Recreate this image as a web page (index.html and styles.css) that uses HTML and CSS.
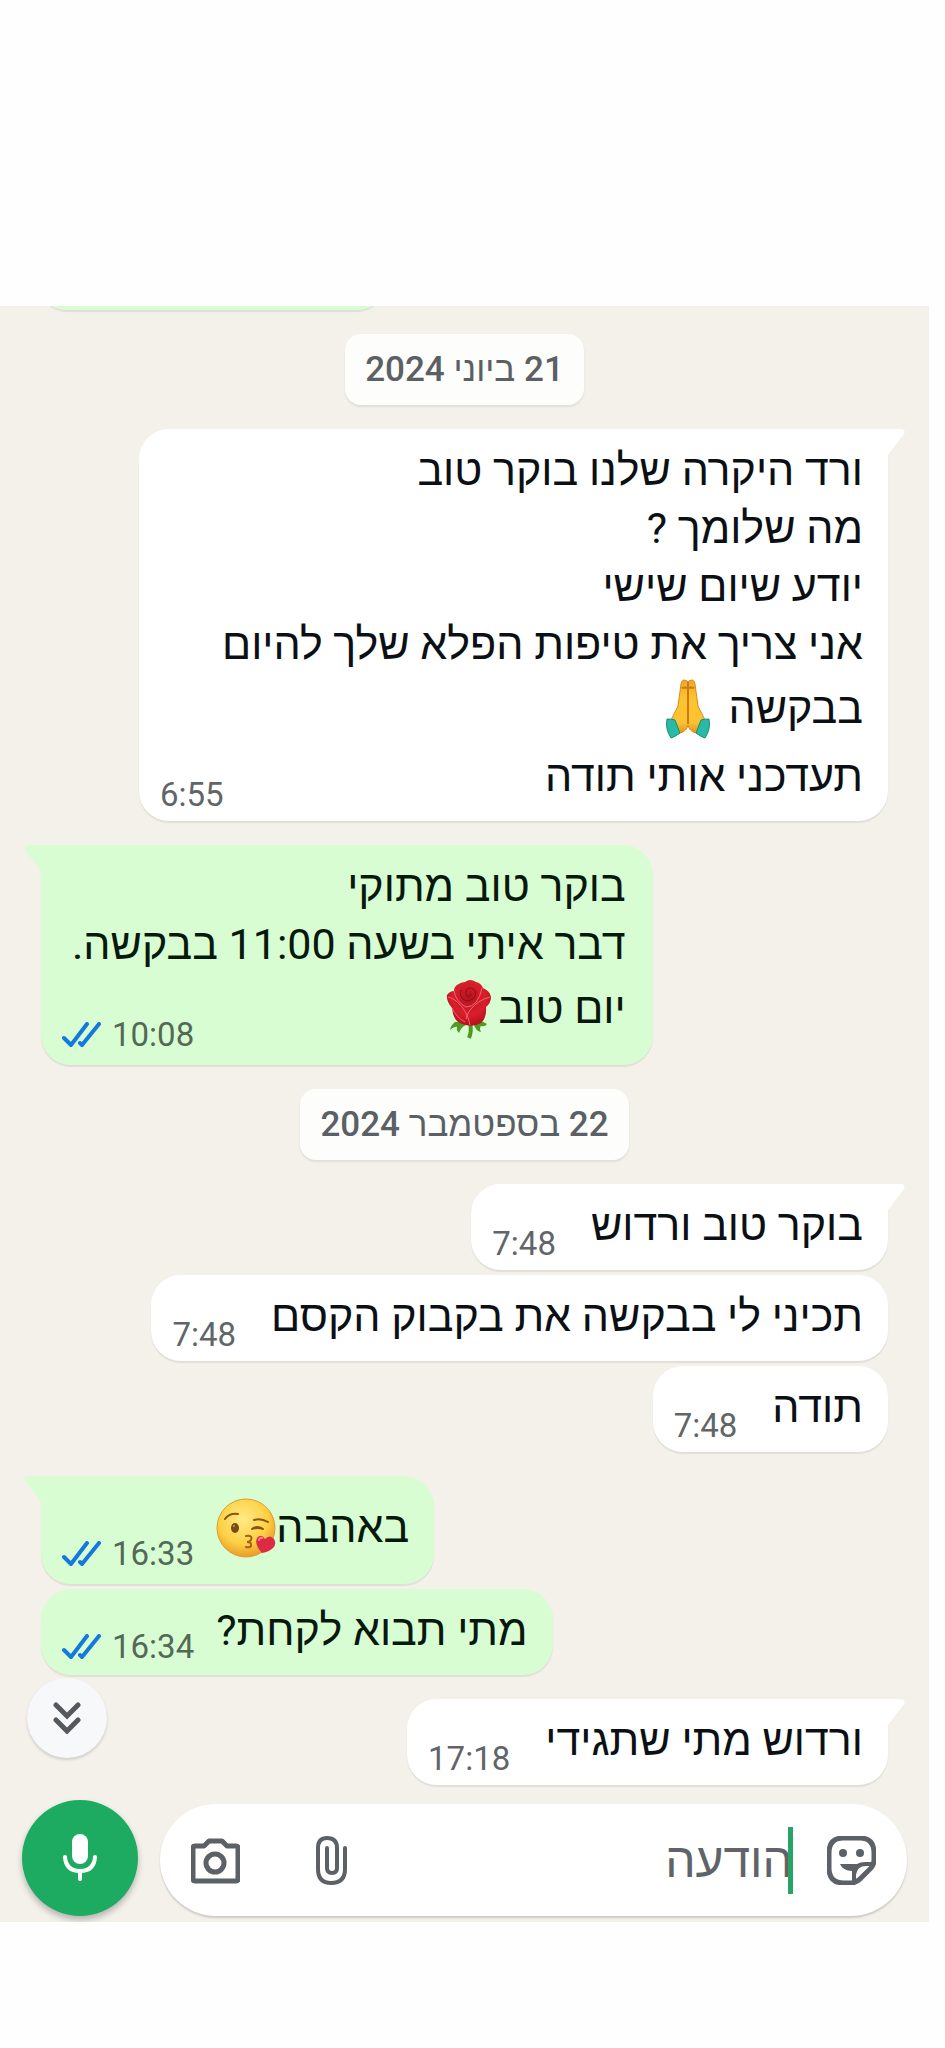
FILE: index.html
```
<!DOCTYPE html>
<html lang="he" dir="rtl">
<head>
    <meta charset="UTF-8">
    <meta name="viewport" content="width=device-width, initial-scale=1.0">
    <title>צ'אט</title>
    <link rel="stylesheet" href="styles.css">
</head>
<body>

    <!-- Shared shapes -->
    <svg class="defs" aria-hidden="true">
        <defs>
            <linearGradient id="skin" x1="0" y1="0" x2="0" y2="1">
                <stop offset="0" stop-color="#f2a629"/>
                <stop offset="0.35" stop-color="#fdc32f"/>
                <stop offset="0.8" stop-color="#fcc233"/>
                <stop offset="1" stop-color="#e8921c"/>
            </linearGradient>
            <radialGradient id="face" cx="0.45" cy="0.35" r="0.65">
                <stop offset="0" stop-color="#ffeb85"/>
                <stop offset="0.65" stop-color="#fdd045"/>
                <stop offset="1" stop-color="#e89c28"/>
            </radialGradient>
            <radialGradient id="rose" cx="0.5" cy="0.4" r="0.6">
                <stop offset="0" stop-color="#b3131f"/>
                <stop offset="0.6" stop-color="#d91f2c"/>
                <stop offset="1" stop-color="#b5101c"/>
            </radialGradient>
            <symbol id="ticks" viewBox="0 0 40 26">
                <path d="M2 16L9 23L25 2M18 21L20 23L37 2" fill="none" stroke="#1479dc" stroke-width="4" stroke-linecap="round" stroke-linejoin="round"/>
            </symbol>
            <symbol id="tail" viewBox="0 0 18 28">
                <path d="M0 0H15Q19 1 17 5L1 26L0 28Z" fill="currentColor"/>
            </symbol>
        </defs>
    </svg>

    <main class="chat">
        <div class="messages">
            <div class="bubble out previous"></div>

            <time class="date">21 <span>ביוני</span> 2024</time>

            <div class="group">
                <article class="bubble in wide">
                    <svg class="tail"><use href="#tail"/></svg>
                    <p>ורד היקרה שלנו בוקר טוב<br>
                    מה שלומך ?<br>
                    יודע שיום שישי<br>
                    אני צריך את טיפות הפלא שלך להיום<br>
                    בבקשה <svg class="emoji" viewBox="0 0 60 60" role="img" aria-label="ידיים צמודות">
                        <path d="M29 2Q24-1 23 5L20 27L14 39Q11 45 14 51L22 54Q29 52 30 46Q31 52 38 54L46 51Q49 45 46 39L40 27L37 5Q36-1 31 2L30 4Z" fill="url(#skin)" stroke="#d98a18" stroke-width="1"/>
                        <path d="M30 3V45M24 9Q27 8 30 9Q33 8 36 9" fill="none" stroke="#c97a12" stroke-width="2"/>
                        <path d="M9 40Q15 40 17 41L22 54Q17 58 13 59Q7 50 9 40Z" fill="#29b9a4" stroke="#12917f"/>
                        <path d="M51 40Q45 40 43 41L38 54Q43 58 47 59Q53 50 51 40Z" fill="#29b9a4" stroke="#12917f"/>
                    </svg><br>
                    תעדכני אותי תודה</p>
                    <div class="meta"><time>6:55</time></div>
                </article>
            </div>

            <div class="group">
                <article class="bubble out wide">
                    <svg class="tail"><use href="#tail"/></svg>
                    <p>בוקר טוב מתוקי<br>
                    דבר איתי בשעה 11:00 בבקשה.<br>
                    יום טוב<svg class="emoji" viewBox="0 0 60 60" role="img" aria-label="ורד">
                        <path d="M31 44Q33 52 30 59" fill="none" stroke="#4c9a1f" stroke-width="4"/>
                        <path d="M16 43Q12 46 11 51Q16 47 18 48Q17 51 20 54Q22 48 27 46H35Q37 52 42 53Q40 49 42 47Q46 48 48 45Q44 42 40 42Z" fill="#4f9927"/>
                        <path d="M18 6Q22 3 26 3Q31-1 37 3Q42 4 44 9Q51 12 52 18Q52 24 47 28Q48 39 42 44Q34 49 23 45Q14 42 13 29Q7 22 8 16Q11 12 15 12Q15 8 18 6Z" fill="url(#rose)"/>
                        <path d="M9 18Q19 20 27 34Q30 40 31 46M51 18Q39 21 31 31Q28 35 27 40M15 12Q17 23 27 28Q39 28 43 9M13 29Q17 38 26 43" fill="none" stroke="#ef6670" stroke-width="1"/>
                        <path d="M22 11Q20 19 27 22Q36 22 37 13Q33 7 28 10Q25 13 28 17Q32 18 32 14" fill="none" stroke="#8f0d19" stroke-width="1"/>
                    </svg></p>
                    <div class="meta"><time>10:08</time><svg class="ticks"><use href="#ticks"/></svg></div>
                </article>
            </div>

            <time class="date">22 <span>בספטמבר</span> 2024</time>

            <div class="group">
                <article class="bubble in">
                    <svg class="tail"><use href="#tail"/></svg>
                    <p>בוקר טוב ורדוש</p>
                    <div class="meta"><time>7:48</time></div>
                </article>
                <article class="bubble in">
                    <p>תכיני לי בבקשה את בקבוק הקסם</p>
                    <div class="meta"><time>7:48</time></div>
                </article>
                <article class="bubble in">
                    <p>תודה</p>
                    <div class="meta"><time>7:48</time></div>
                </article>
            </div>

            <div class="group">
                <article class="bubble out with-emoji">
                    <svg class="tail"><use href="#tail"/></svg>
                    <p>באהבה<svg class="emoji" viewBox="0 0 60 60" role="img" aria-label="פרצוף שולח נשיקה">
                        <circle cx="30" cy="30" r="29" fill="url(#face)" stroke="#e09a2b"/>
                        <path d="M9 21Q13 15 22 16M38 22Q45 20 52 24" fill="none" stroke="#8a5312" stroke-width="2" stroke-linecap="round"/>
                        <ellipse cx="19" cy="30" rx="4" ry="5" fill="#7b4a14"/>
                        <circle cx="18" cy="28" r="1" fill="#c99a5c"/>
                        <path d="M36 31Q41 27 47 31Q42 29 36 31Z" fill="#8a5312" stroke="#8a5312" stroke-width="2" stroke-linejoin="round"/>
                        <path d="M30 38Q37 37 35 42Q34 44 31 44Q36 44 35 48Q34 50 30 49" fill="none" stroke="#a5601a" stroke-width="2" stroke-linecap="round"/>
                        <path d="M46 55Q38 46 41 40Q45 35 49 41Q54 36 58 41Q61 46 57 50Q53 54 46 55Z" fill="#dc2c44"/>
                        <path d="M43 42Q44 39 46 40" fill="none" stroke="#f68a98" stroke-width="2" stroke-linecap="round"/>
                    </svg></p>
                    <div class="meta"><time>16:33</time><svg class="ticks"><use href="#ticks"/></svg></div>
                </article>
                <article class="bubble out">
                    <p>מתי תבוא לקחת?</p>
                    <div class="meta"><time>16:34</time><svg class="ticks"><use href="#ticks"/></svg></div>
                </article>
            </div>

            <div class="group">
                <article class="bubble in">
                    <svg class="tail"><use href="#tail"/></svg>
                    <p>ורדוש מתי שתגידי</p>
                    <div class="meta"><time>17:18</time></div>
                </article>
            </div>
        </div>

        <!-- Message box -->
        <form class="composer">
            <button type="button" class="jump" aria-label="גלילה למטה">
                <svg viewBox="0 0 28 32"><path d="M3 3L14 14L25 3M3 18L14 29L25 18" fill="none" stroke="#54595e" stroke-width="5" stroke-linecap="round" stroke-linejoin="miter"/></svg>
            </button>
            <div class="field">
                <button type="button" class="icon" aria-label="מדבקות">
                    <svg viewBox="0 0 49 49">
                        <path d="M16 2H33Q47 2 47 17V24Q47 29 44 32L33 43Q29 47 24 47H17Q2 47 2 32V17Q2 2 16 2Z" fill="none" stroke="currentColor" stroke-width="5"/>
                        <circle cx="16" cy="17" r="4" fill="currentColor"/>
                        <circle cx="33" cy="17" r="4" fill="currentColor"/>
                        <path d="M13 28H30Q33 26 38 26H47L46 30H39Q30 30 29 39V46H25V35Q16 35 13 28Z" fill="currentColor"/>
                    </svg>
                </button>
                <span class="caret"></span>
                <input type="text" class="text" placeholder="הודעה" aria-label="הודעה">
                <button type="button" class="icon" aria-label="צירוף קובץ">
                    <svg viewBox="0 0 49 49"><path d="M38 12V33Q38 47 24 47Q11 47 11 33V12Q11 2 20 2Q30 2 30 12V32Q30 37 25 37Q20 37 20 32V12" fill="none" stroke="currentColor" stroke-width="4" stroke-linecap="round"/></svg>
                </button>
                <button type="button" class="icon" aria-label="מצלמה">
                    <svg viewBox="0 0 49 49">
                        <path d="M4 10H13L18 5H31L36 10H45Q47 10 47 12V43Q47 45 45 45H4Q2 45 2 43V12Q2 10 4 10Z" fill="none" stroke="currentColor" stroke-width="5" stroke-linejoin="round"/>
                        <circle cx="24" cy="27" r="9" fill="none" stroke="currentColor" stroke-width="5"/>
                    </svg>
                </button>
            </div>
            <button type="button" class="mic" aria-label="הודעה קולית">
                <svg viewBox="0 0 34 48">
                    <rect x="9" y="0" width="16" height="30" rx="8" fill="#fff"/>
                    <path d="M2 23Q3 37 17 37Q31 37 32 23M17 38V45" fill="none" stroke="#fff" stroke-width="4" stroke-linecap="round"/>
                </svg>
            </button>
        </form>
    </main>

</body>
</html>
```
FILE: styles.css
```
* {
    box-sizing: border-box;
}

body {
    margin: 0;
    background: #fefefe;
    color: #0b1014;
    font-family: Roboto, "Liberation Sans", sans-serif;
}

.defs {
    position: absolute;
    width: 0;
    height: 0;
}

.chat {
    margin: 306px 16px 125px 0;
    background: #f4f1eb;
    overflow: hidden;
}

.messages {
    display: flex;
    flex-direction: column;
    gap: 24px;
    padding: 0 41px;
}

.group {
    display: flex;
    flex-direction: column;
    gap: 5px;
}

.date {
    align-self: center;
    padding: 0 20px;
    border-radius: 16px;
    background: #fdfdfb;
    box-shadow: 0 2px 2px rgba(0, 0, 0, 0.08);
    color: #5b6064;
    font-size: 35px;
    font-weight: 500;
    line-height: 71px;
}

.date span {
    font-weight: 400;
}

/* Bubbles */
.bubble {
    position: relative;
    display: flex;
    align-items: flex-end;
    max-width: calc(100% - 98px);
    padding: 12px 25px 16px 21px;
    border-radius: 30px;
    box-shadow: 0 2px 1px rgba(0, 0, 0, 0.08);
}

.bubble p {
    margin: 0;
    font-size: 43px;
    line-height: 58px;
}

.in {
    align-self: flex-start;
    background: #fff;
    color: #0b1014;
}

.out {
    align-self: flex-end;
    background: #d8fdd3;
    color: #07180c;
}

.previous {
    width: 342px;
    height: 50px;
    margin-top: -46px;
}

/* Time sits over the last line of long messages */
.wide {
    display: grid;
    padding-left: 31px;
}

.wide p,
.wide .meta {
    grid-area: 1 / 1;
}

.wide .meta {
    align-self: end;
    justify-self: end;
    margin-left: -10px;
}

.in.wide {
    width: 100%;
}

.out.wide {
    padding-right: 27px;
    padding-bottom: 18px;
}

.with-emoji {
    padding-top: 16px;
    padding-bottom: 18px;
}

.tail {
    position: absolute;
    top: 0;
    width: 18px;
    height: 28px;
}

.in .tail {
    right: -17px;
    color: #fff;
}

.out .tail {
    left: -17px;
    color: #d8fdd3;
    transform: scaleX(-1);
}

.in:has(.tail) {
    border-top-right-radius: 0;
}

.out:has(.tail) {
    border-top-left-radius: 0;
}

.meta {
    display: flex;
    align-items: center;
    gap: 10px;
    margin-right: 35px;
    margin-bottom: -8px;
    color: #616568;
    font-size: 33px;
    line-height: 36px;
}

.out .meta {
    margin-right: 22px;
    margin-bottom: -6px;
    color: #526a55;
}

.ticks {
    width: 40px;
    height: 26px;
}

.emoji {
    width: 60px;
    height: 60px;
    margin: 6px 0 8px;
    vertical-align: -24px;
}

/* Composer */
.composer {
    position: relative;
    display: flex;
    align-items: flex-end;
    gap: 22px;
    padding: 15px 22px 6px;
}

button {
    flex: none;
    padding: 0;
    border: none;
    background: none;
    cursor: pointer;
}

button svg {
    display: block;
    margin: auto;
}

.field {
    flex: 1;
    display: flex;
    align-items: center;
    min-width: 0;
    height: 112px;
    padding: 0 31px;
    border-radius: 56px;
    background: #fff;
    box-shadow: 0 2px 2px rgba(0, 0, 0, 0.16);
}

.icon {
    width: 49px;
    height: 49px;
    color: #5b6166;
}

.icon + .icon {
    margin-right: 67px;
}

.caret {
    z-index: 1;
    width: 5px;
    height: 67px;
    margin-right: 34px;
    margin-left: -5px;
    background: #27a567;
}

.text {
    flex: 1;
    min-width: 0;
    padding: 0;
    border: none;
    outline: none;
    background: none;
    font-family: inherit;
    font-size: 48px;
}

.text::placeholder {
    color: #606468;
    opacity: 1;
}

.mic {
    width: 116px;
    height: 116px;
    border-radius: 50%;
    background: #1dab61;
    box-shadow: 0 4px 6px rgba(0, 0, 0, 0.25);
}

.mic svg {
    width: 34px;
    height: 48px;
}

.jump {
    position: absolute;
    left: 27px;
    top: -107px;
    width: 80px;
    height: 80px;
    border-radius: 50%;
    background: #f7f8fa;
    box-shadow: 0 2px 3px rgba(0, 0, 0, 0.15);
}

.jump svg {
    width: 28px;
    height: 32px;
}
```
